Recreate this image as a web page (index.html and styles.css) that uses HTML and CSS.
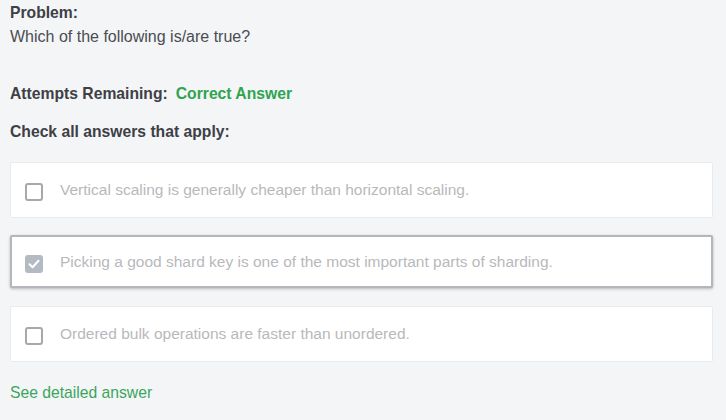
FILE: index.html
```html
<!DOCTYPE html>
<html>
<head>
<meta charset="utf-8">
<link rel="stylesheet" href="styles.css">
</head>
<body>
<div class="page">
  <div class="problem">
    <div class="label">Problem:</div>
    <div class="question">Which of the following is/are true?</div>
  </div>
  <div class="attempts">
    <span class="label">Attempts Remaining:</span>
    <span class="correct">Correct Answer</span>
  </div>
  <div class="label check-all">Check all answers that apply:</div>
  <div class="answers">
    <div class="answer">
      <span class="box"></span>
      <span class="text">Vertical scaling is generally cheaper than horizontal scaling.</span>
    </div>
    <div class="answer selected">
      <span class="box checked">
        <svg width="12" height="10" viewBox="0 0 12 10"><path d="M1.5 5.2 L4.6 8.2 L10.5 1.8" fill="none" stroke="#fff" stroke-width="2" stroke-linecap="round" stroke-linejoin="round"/></svg>
      </span>
      <span class="text">Picking a good shard key is one of the most important parts of sharding.</span>
    </div>
    <div class="answer">
      <span class="box"></span>
      <span class="text">Ordered bulk operations are faster than unordered.</span>
    </div>
  </div>
  <a class="detail" href="#">See detailed answer</a>
</div>
</body>
</html>
```
FILE: styles.css
```css
html, body {
  margin: 0;
  padding: 0;
  background: #f4f5f7;
}
body {
  font-family: "Liberation Sans", Arial, sans-serif;
  color: #3d4045;
  font-size: 15.7px;
}
.page {
  padding: 4px 13px 0 10px;
  display: flex;
  flex-direction: column;
}
.label {
  font-weight: bold;
  color: #3d4045;
}
.problem .label {
  line-height: 18px;
}
.question {
  margin-top: 6px;
  line-height: 18px;
  font-size: 16px;
  color: #4a4d52;
}
.attempts {
  margin-top: 39px;
  display: flex;
  gap: 8px;
  line-height: 18px;
}
.correct {
  color: #2fa44f;
  font-weight: bold;
}
.check-all {
  margin-top: 20px;
  line-height: 18px;
}
.answers {
  margin-top: 21px;
  display: flex;
  flex-direction: column;
  gap: 17px;
}
.answer {
  display: flex;
  align-items: center;
  height: 56px;
  box-sizing: border-box;
  background: #fff;
  border: 1px solid #e8eaec;
  border-radius: 2px;
  padding-left: 14px;
}
.answer.selected {
  height: 53px;
  border: 2px solid #b3b7bb;
  box-shadow: 0 1px 3px rgba(0,0,0,0.25);
  padding-left: 13px;
  margin-bottom: 1px;
}
.box {
  width: 18px;
  height: 18px;
  box-sizing: border-box;
  border: 2px solid #a6a8ab;
  border-radius: 3px;
  flex: none;
  margin-top: 4px;
  display: flex;
  align-items: center;
  justify-content: center;
}
.box.checked {
  background: #b3bac2;
  border-color: #b3bac2;
}
.text {
  margin-left: 17px;
  color: #b8b9bb;
  font-size: 15.5px;
}
.detail {
  margin-top: 22px;
  color: #3ba55c;
  text-decoration: none;
  line-height: 18px;
}
```
